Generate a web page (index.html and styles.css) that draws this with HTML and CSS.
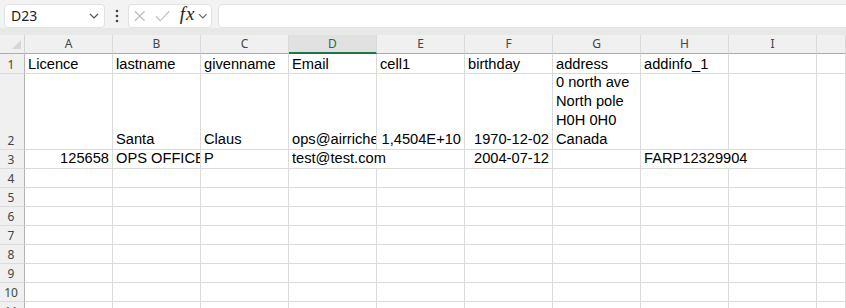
FILE: index.html
```html
<!DOCTYPE html>
<html lang="en">
<head>
    <meta charset="UTF-8">
    <title>Sheet</title>
    <link rel="stylesheet" href="styles.css">
</head>
<body>
    <div class="toolbar">
        <div class="namebox">
            <span>D23</span>
            <svg class="chev" width="10" height="6" viewBox="0 0 10 6"><path d="M1 1L5 5L9 1" fill="none" stroke="#555" stroke-width="1.2"/></svg>
        </div>
        <svg class="kebab" width="4" height="14" viewBox="0 0 4 14"><circle cx="2" cy="2" r="1.3" fill="#444"/><circle cx="2" cy="7" r="1.3" fill="#444"/><circle cx="2" cy="12" r="1.3" fill="#444"/></svg>
        <div class="fbtns">
            <svg width="12" height="12" viewBox="0 0 12 12"><path d="M1 1L11 11M11 1L1 11" stroke="#bcbcbc" stroke-width="1.2" fill="none"/></svg>
            <svg class="check" width="16" height="12" viewBox="0 0 16 12"><path d="M1 6.5L5.5 11L15 1" stroke="#bcbcbc" stroke-width="1.2" fill="none"/></svg>
            <span class="fx">fx</span>
            <svg class="chev" width="10" height="6" viewBox="0 0 10 6"><path d="M1 1L5 5L9 1" fill="none" stroke="#666" stroke-width="1.2"/></svg>
        </div>
        <div class="finput"></div>
    </div>
    <div class="band"></div>

    <div class="sheet">
        <div class="row head">
            <div class="corner"><span class="tri"></span></div>
            <div class="hd">A</div><div class="hd">B</div><div class="hd">C</div>
            <div class="hd active">D</div><div class="hd">E</div><div class="hd">F</div>
            <div class="hd">G</div><div class="hd">H</div><div class="hd">I</div><div class="hd"></div>
        </div>
        <div class="row r1">
            <div class="rh">1</div>
            <div class="c">Licence</div><div class="c">lastname</div><div class="c">givenname</div>
            <div class="c">Email</div><div class="c">cell1</div><div class="c">birthday</div>
            <div class="c">address</div><div class="c">addinfo_1</div><div class="c"></div><div class="c"></div>
        </div>
        <div class="row r2">
            <div class="rh">2</div>
            <div class="c"></div><div class="c">Santa</div><div class="c">Claus</div>
            <div class="c">ops@airricheck.com</div><div class="c num">1,4504E+10</div><div class="c num">1970-12-02</div>
            <div class="c">0 north ave<br>North pole<br>H0H 0H0<br>Canada</div>
            <div class="c"></div><div class="c"></div><div class="c"></div>
        </div>
        <div class="row">
            <div class="rh">3</div>
            <div class="c num">125658</div><div class="c">OPS OFFICER</div><div class="c">P</div>
            <div class="c span2">test@test.com</div><div class="c num">2004-07-12</div>
            <div class="c"></div><div class="c span2">FARP12329904</div><div class="c"></div>
        </div>
        <div class="row"><div class="rh">4</div><div class="c"></div><div class="c"></div><div class="c"></div><div class="c"></div><div class="c"></div><div class="c"></div><div class="c"></div><div class="c"></div><div class="c"></div><div class="c"></div></div>
        <div class="row"><div class="rh">5</div><div class="c"></div><div class="c"></div><div class="c"></div><div class="c"></div><div class="c"></div><div class="c"></div><div class="c"></div><div class="c"></div><div class="c"></div><div class="c"></div></div>
        <div class="row"><div class="rh">6</div><div class="c"></div><div class="c"></div><div class="c"></div><div class="c"></div><div class="c"></div><div class="c"></div><div class="c"></div><div class="c"></div><div class="c"></div><div class="c"></div></div>
        <div class="row"><div class="rh">7</div><div class="c"></div><div class="c"></div><div class="c"></div><div class="c"></div><div class="c"></div><div class="c"></div><div class="c"></div><div class="c"></div><div class="c"></div><div class="c"></div></div>
        <div class="row"><div class="rh">8</div><div class="c"></div><div class="c"></div><div class="c"></div><div class="c"></div><div class="c"></div><div class="c"></div><div class="c"></div><div class="c"></div><div class="c"></div><div class="c"></div></div>
        <div class="row"><div class="rh">9</div><div class="c"></div><div class="c"></div><div class="c"></div><div class="c"></div><div class="c"></div><div class="c"></div><div class="c"></div><div class="c"></div><div class="c"></div><div class="c"></div></div>
        <div class="row"><div class="rh">10</div><div class="c"></div><div class="c"></div><div class="c"></div><div class="c"></div><div class="c"></div><div class="c"></div><div class="c"></div><div class="c"></div><div class="c"></div><div class="c"></div></div>
        <div class="row"><div class="rh">11</div><div class="c"></div><div class="c"></div><div class="c"></div><div class="c"></div><div class="c"></div><div class="c"></div><div class="c"></div><div class="c"></div><div class="c"></div><div class="c"></div></div>
    </div>
</body>
</html>
```

FILE: styles.css
```css
body {
    margin: 0;
    background: #fff;
    overflow: hidden;
    font-family: "Liberation Sans", Arial, sans-serif;
}
.toolbar {
    display: flex;
    align-items: center;
    height: 28px;
    padding: 3px 0 0 4px;
    box-sizing: border-box;
    background: #f3f3f3;
    overflow: hidden;
}
.namebox, .fbtns, .finput {
    height: 24px;
    box-sizing: border-box;
    background: #fff;
    border: 1px solid #e2e2e2;
    border-radius: 4px;
    display: flex;
    align-items: center;
}
.namebox {
    width: 101px;
    padding: 0 5px 0 6px;
    justify-content: space-between;
    font-family: "Noto Sans", sans-serif;
    font-size: 14px;
    color: #222;
}
.kebab {
    margin: 0 9px 0 10px;
}
.fbtns {
    width: 84px;
    padding: 0 3px 0 5px;
    gap: 0;
}
.fbtns .check {
    margin-left: 10px;
}
.fx {
    font-family: "Liberation Serif", serif;
    font-style: italic;
    font-size: 19px;
    color: #222;
    margin: -3px 3px 0 9px;
    letter-spacing: 1px;
}
.finput {
    flex: 1;
    margin-left: 6px;
    margin-right: -8px;
}
.band {
    height: 7px;
    background: #e7e9e7;
}

.sheet {
    font-size: 14.67px;
    color: #000;
}
.row {
    display: grid;
    grid-template-columns: 25px repeat(9, 88px) 1fr;
    height: 19px;
}
.row.head { height: 19px; }
.row.r1 { height: 20px; }
.row.r2 { height: 76px; }

.corner {
    background: #f0f0f0;
    border-right: 1px solid #d4d4d4;
    border-bottom: 1px solid #ababab;
    display: flex;
    justify-content: flex-end;
    align-items: flex-end;
    padding: 0 3px 4px 0;
}
.tri {
    width: 0;
    height: 0;
    border-left: 9px solid transparent;
    border-bottom: 9px solid #d6d6d6;
}
.hd {
    background: #f0f0f0;
    border-right: 1px solid #d9d9d9;
    border-bottom: 1px solid #ababab;
    font-family: "Noto Sans", sans-serif;
    font-size: 12px;
    color: #444;
    text-align: center;
    line-height: 18px;
}
.hd.active {
    background: #e1e1e1;
    color: #1e6e42;
    border-bottom: 2px solid #217346;
    line-height: 17px;
}
.rh {
    background: #f0f0f0;
    border-right: 1px solid #b4b4b4;
    border-bottom: 1px solid #dcdcdc;
    font-family: "Noto Sans", sans-serif;
    font-size: 12px;
    color: #444;
    text-align: center;
    padding-right: 2px;
    display: flex;
    align-items: flex-end;
    justify-content: center;
    line-height: 17px;
}
.c {
    border-right: 1px solid #dadada;
    border-bottom: 1px solid #dadada;
    padding: 0 3px;
    line-height: 19px;
    white-space: nowrap;
    overflow: hidden;
    display: flex;
    flex-direction: column;
    justify-content: flex-end;
    padding-bottom: 0;
}
.r1 .c { line-height: 18px; }
.c.num { align-items: flex-end; }
.c.span2 { grid-column: span 2; }
```
